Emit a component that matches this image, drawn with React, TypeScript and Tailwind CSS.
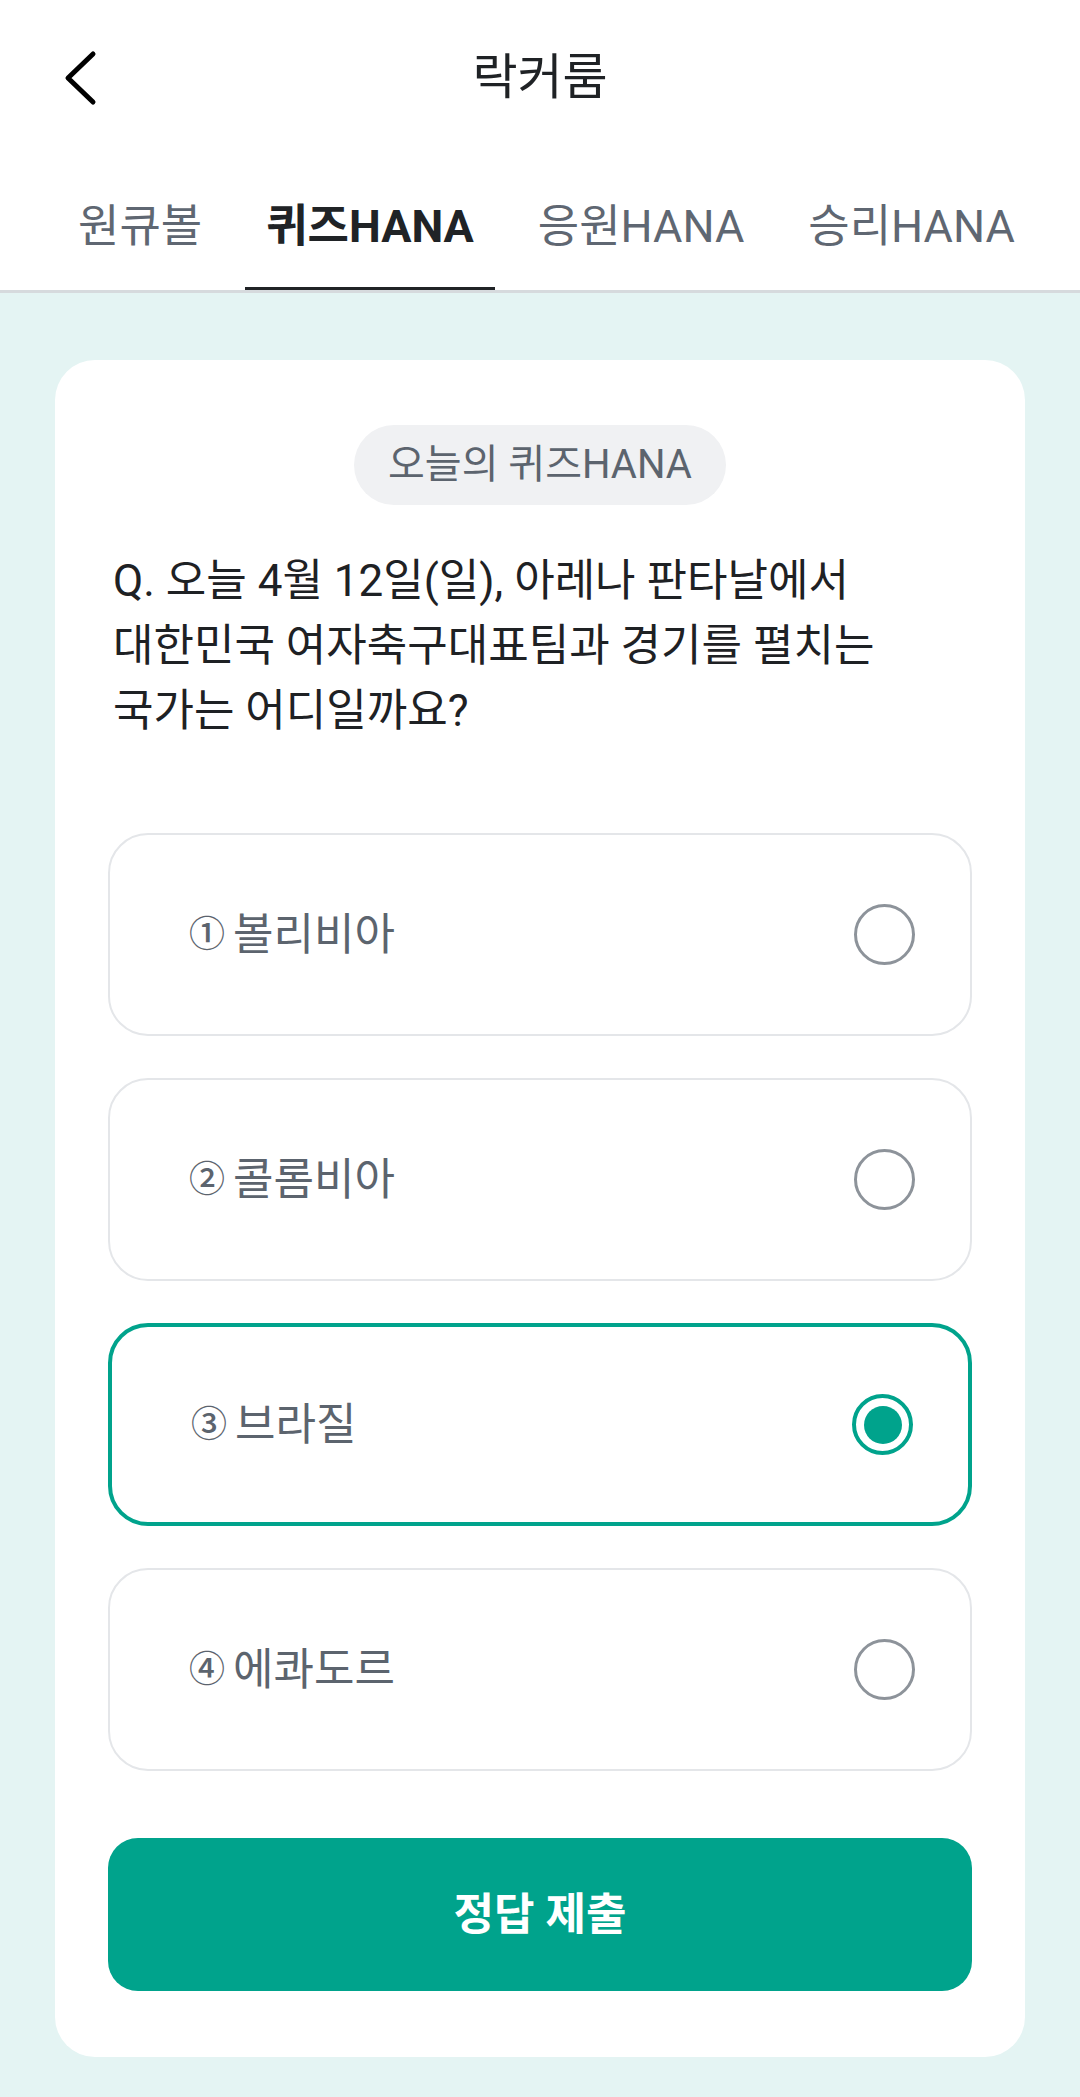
import React, { useState } from "react";

const FONT = "font-['Roboto','Noto_Sans_CJK_KR',sans-serif]";

const tabs = ["원큐볼", "퀴즈HANA", "응원HANA", "승리HANA"];

const options = [
  { num: "①", label: "볼리비아" },
  { num: "②", label: "콜롬비아" },
  { num: "③", label: "브라질" },
  { num: "④", label: "에콰도르" },
];

function Radio({ checked }: { checked: boolean }) {
  if (checked) {
    return (
      <div className="w-[61px] h-[61px] rounded-full border-[4px] border-[#00a38c] flex items-center justify-center">
        <div className="w-[38px] h-[38px] rounded-full bg-[#00a38c]" />
      </div>
    );
  }
  return <div className="w-[61px] h-[61px] rounded-full border-[3px] border-[#8d939a]" />;
}

export default function App() {
  const [selected, setSelected] = useState(2);
  const activeTab = 1;

  return (
    <div className={`${FONT} min-h-screen bg-[#e4f4f3]`}>
      {/* Header */}
      <header className="bg-white">
        <div className="relative h-[156px] flex items-center justify-center">
          <button className="absolute left-[60px] top-[48px] w-[40px] h-[60px] flex items-center justify-center">
            <svg width="34" height="56" viewBox="0 0 34 56" fill="none">
              <path d="M30 4 L5 28 L30 52" stroke="#000" strokeWidth="5" strokeLinecap="round" strokeLinejoin="round" />
            </svg>
          </button>
          <h1 className="text-[49px] font-normal text-[#1f2225]">락커룸</h1>
        </div>

        {/* Tabs */}
        <nav className="flex gap-[22px] pl-[57px] border-b-[3px] border-[#d6dadd] overflow-hidden">
          {tabs.map((t, i) => (
            <button
              key={t}
              className={`shrink-0 px-[21px] pt-[49px] pb-[38px] -mb-[3px] border-b-[6px] text-[45px] leading-[44px] whitespace-nowrap ${
                i === activeTab
                  ? "border-[#202326] text-[#202326] font-bold"
                  : "border-transparent text-[#5f6772] font-normal"
              }`}
            >
              {t}
            </button>
          ))}
        </nav>
      </header>

      {/* Content */}
      <main className="px-[55px] pt-[67px] pb-[40px]">
        <section className="bg-white rounded-[40px] px-[53px] pt-[65px] pb-[66px]">
          <div className="flex justify-center">
            <span className="h-[80px] px-[34px] rounded-full bg-[#f0f1f3] text-[#5c646e] text-[40px] flex items-center">
              오늘의 퀴즈HANA
            </span>
          </div>

          <p className="mt-[44px] pl-[5px] text-[44px] leading-[65px] font-normal text-[#1e2124]">
            Q. 오늘 4월 12일(일), 아레나 판타날에서
            <br />
            대한민국 여자축구대표팀과 경기를 펼치는
            <br />
            국가는 어디일까요?
          </p>

          <ul className="mt-[89px] flex flex-col gap-[42px]">
            {options.map((o, i) => {
              const on = i === selected;
              return (
                <li key={o.label}>
                  <button
                    onClick={() => setSelected(i)}
                    className={`w-full h-[203px] rounded-[40px] bg-white flex items-center justify-between pl-[79px] pr-[55px] ${
                      on ? "border-[4px] border-[#00a38c]" : "border-[2px] border-[#e4e6e9]"
                    }`}
                  >
                    <span className="flex items-center gap-[8px] text-[#5c646e]">
                      <span className="text-[36px] font-medium">{o.num}</span>
                      <span className="text-[44px]">{o.label}</span>
                    </span>
                    <Radio checked={on} />
                  </button>
                </li>
              );
            })}
          </ul>

          <button className="mt-[67px] w-full h-[153px] rounded-[30px] bg-[#00a38c] text-white text-[44px] font-bold">
            정답 제출
          </button>
        </section>
      </main>
    </div>
  );
}
